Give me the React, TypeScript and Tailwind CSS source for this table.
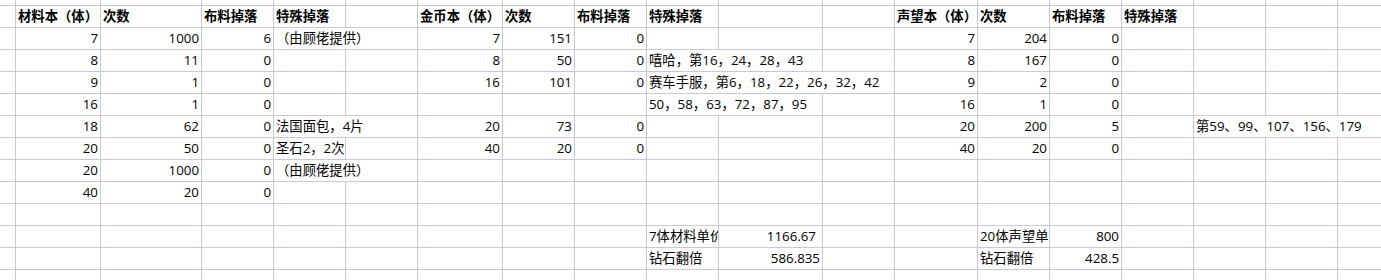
import React from "react";

type Cell = { t: string; r?: boolean; b?: boolean; span?: 2 | 3; pr?: string } | null;

const COLS = 19;

// 工作表数据，按行 (A..S)
const ROWS: Cell[][] = [
  [],
  [
    null,
    { t: "材料本（体）", b: true },
    { t: "次数", b: true },
    { t: "布料掉落", b: true },
    { t: "特殊掉落", b: true },
    null,
    { t: "金币本（体）", b: true },
    { t: "次数", b: true },
    { t: "布料掉落", b: true },
    { t: "特殊掉落", b: true },
    null,
    null,
    { t: "声望本（体）", b: true },
    { t: "次数", b: true },
    { t: "布料掉落", b: true },
    { t: "特殊掉落", b: true },
  ],
  [
    null,
    { t: "7", r: true },
    { t: "1000", r: true },
    { t: "6", r: true },
    { t: "（由顾佬提供）", span: 2 },
    { t: "7", r: true },
    { t: "151", r: true },
    { t: "0", r: true },
    null,
    null,
    null,
    { t: "7", r: true },
    { t: "204", r: true },
    { t: "0", r: true },
  ],
  [
    null,
    { t: "8", r: true },
    { t: "11", r: true },
    { t: "0", r: true },
    null,
    null,
    { t: "8", r: true },
    { t: "50", r: true },
    { t: "0", r: true },
    { t: "嘻哈，第16，24，28，43", span: 2 },
    null,
    { t: "8", r: true },
    { t: "167", r: true },
    { t: "0", r: true },
  ],
  [
    null,
    { t: "9", r: true },
    { t: "1", r: true },
    { t: "0", r: true },
    null,
    null,
    { t: "16", r: true },
    { t: "101", r: true },
    { t: "0", r: true },
    { t: "赛车手服，第6，18，22，26，32，42", span: 3 },
    { t: "9", r: true },
    { t: "2", r: true },
    { t: "0", r: true },
  ],
  [
    null,
    { t: "16", r: true },
    { t: "1", r: true },
    { t: "0", r: true },
    null,
    null,
    null,
    null,
    null,
    { t: "50，58，63，72，87，95", span: 2 },
    null,
    { t: "16", r: true },
    { t: "1", r: true },
    { t: "0", r: true },
  ],
  [
    null,
    { t: "18", r: true },
    { t: "62", r: true },
    { t: "0", r: true },
    { t: "法国面包，4片", span: 2 },
    { t: "20", r: true },
    { t: "73", r: true },
    { t: "0", r: true },
    null,
    null,
    null,
    { t: "20", r: true },
    { t: "200", r: true },
    { t: "5", r: true },
    null,
    { t: "第59、99、107、156、179", span: 3 },
  ],
  [
    null,
    { t: "20", r: true },
    { t: "50", r: true },
    { t: "0", r: true },
    { t: "圣石2，2次" },
    null,
    { t: "40", r: true },
    { t: "20", r: true },
    { t: "0", r: true },
    null,
    null,
    null,
    { t: "40", r: true },
    { t: "20", r: true },
    { t: "0", r: true },
  ],
  [
    null,
    { t: "20", r: true },
    { t: "1000", r: true },
    { t: "0", r: true },
    { t: "（由顾佬提供）", span: 2 },
  ],
  [null, { t: "40", r: true }, { t: "20", r: true }, { t: "0", r: true }],
  [],
  [
    null, null, null, null, null, null, null, null, null,
    { t: "7体材料单价" },
    { t: "1166.67", r: true, pr: "pr-[6px]" },
    null,
    null,
    { t: "20体声望单价" },
    { t: "800", r: true },
  ],
  [
    null, null, null, null, null, null, null, null, null,
    { t: "钻石翻倍" },
    { t: "586.835", r: true },
    null,
    null,
    { t: "钻石翻倍" },
    { t: "428.5", r: true },
  ],
  [],
];

function Row({ cells }: { cells: Cell[] }) {
  const out: React.ReactNode[] = [];
  let col = 0;
  let i = 0;
  while (col < COLS) {
    const c = cells[i] ?? null;
    i++;
    const span = c?.span ?? 1;
    out.push(
      <div
        key={col}
        className={
          "flex items-center overflow-hidden whitespace-nowrap border-r border-b border-[#c5c9d8] pl-[2px] leading-[19px] " +
          (span === 2 ? "col-span-2 " : span === 3 ? "col-span-3 " : "") +
          (c?.r ? "justify-end " + (c.pr ?? "pr-[2px] ") : "") +
          (c?.b ? "font-bold" : "")
        }
      >
        {c?.t}
      </div>
    );
    col += span;
  }
  return <>{out}</>;
}

export default function App() {
  return (
    <div
      className="w-[1381px] h-[280px] overflow-hidden bg-white text-[13.33px] text-black"
      style={{ fontFamily: '"Open Sans", "Noto Sans CJK SC", sans-serif' }}
    >
      <div className="grid grid-cols-[16px_85px_101px_72px_72px_72px_85px_72px_72px_72px_104px_72px_83px_72px_72px_72px_72px_72px_72px] grid-rows-[6px_repeat(13,22px)] w-[1410px]">
        {ROWS.map((cells, r) => (
          <Row key={r} cells={cells} />
        ))}
      </div>
    </div>
  );
}
